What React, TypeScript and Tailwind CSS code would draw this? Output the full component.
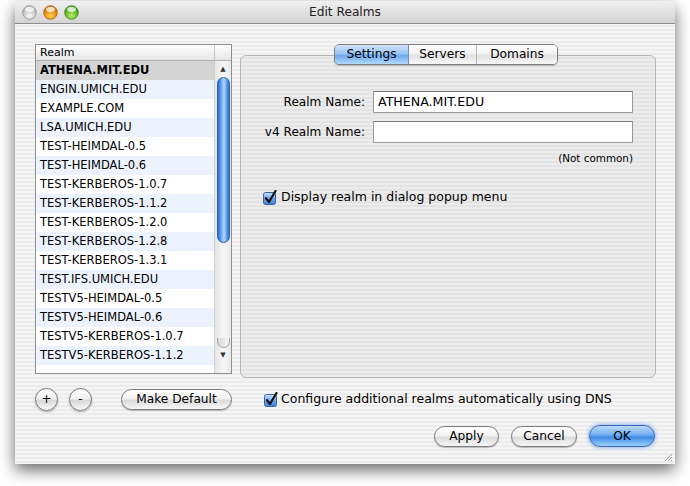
const realms = [
  "ATHENA.MIT.EDU",
  "ENGIN.UMICH.EDU",
  "EXAMPLE.COM",
  "LSA.UMICH.EDU",
  "TEST-HEIMDAL-0.5",
  "TEST-HEIMDAL-0.6",
  "TEST-KERBEROS-1.0.7",
  "TEST-KERBEROS-1.1.2",
  "TEST-KERBEROS-1.2.0",
  "TEST-KERBEROS-1.2.8",
  "TEST-KERBEROS-1.3.1",
  "TEST.IFS.UMICH.EDU",
  "TESTV5-HEIMDAL-0.5",
  "TESTV5-HEIMDAL-0.6",
  "TESTV5-KERBEROS-1.0.7",
  "TESTV5-KERBEROS-1.1.2",
];

function Light({ c1, c2, c3 }: { c1: string; c2: string; c3: string }) {
  const id = "g" + c1.replace("#", "");
  return (
    <svg width="15" height="15" viewBox="0 0 15 15">
      <defs>
        <radialGradient id={id} cx="50%" cy="75%" r="65%">
          <stop offset="0%" stopColor={c1} />
          <stop offset="100%" stopColor={c2} />
        </radialGradient>
      </defs>
      <circle cx="7.5" cy="7.5" r="6.8" fill={`url(#${id})`} stroke={c3} strokeWidth="0.8" />
      <ellipse cx="7.5" cy="4.3" rx="4.3" ry="2.6" fill="white" opacity="0.75" />
    </svg>
  );
}

function CheckBox() {
  return (
    <svg width="15" height="15" viewBox="0 0 15 15" className="shrink-0">
      <defs>
        <linearGradient id="cbg" x1="0" y1="0" x2="0" y2="1">
          <stop offset="0%" stopColor="#cfe3fb" />
          <stop offset="50%" stopColor="#6ea6ea" />
          <stop offset="100%" stopColor="#3d7fd9" />
        </linearGradient>
      </defs>
      <rect x="0.5" y="2.5" width="12" height="12" rx="2" fill="url(#cbg)" stroke="#3b63a0" />
      <path d="M3 8.2 L6 12 L12.5 1" stroke="#111" strokeWidth="2.2" fill="none" strokeLinecap="round" strokeLinejoin="round" />
    </svg>
  );
}

function Pill({ label, className }: { label: string; className?: string }) {
  return (
    <button
      className={
        "h-[21px] rounded-full border border-[#7c7c7c] bg-[linear-gradient(180deg,#ffffff_0%,#f1f1f1_45%,#dcdcdc_55%,#f6f6f6_100%)] shadow-[0_1px_1px_rgba(0,0,0,0.25)] text-[12.2px] text-black leading-none " +
        (className ?? "")
      }
    >
      {label}
    </button>
  );
}

function Round({ label }: { label: string }) {
  return (
    <button className="w-[23px] h-[23px] rounded-full border border-[#7a7a7a] bg-[linear-gradient(180deg,#ffffff_0%,#f0f0f0_45%,#d8d8d8_55%,#f8f8f8_100%)] shadow-[0_1px_2px_rgba(0,0,0,0.3)] text-[12px] leading-none text-black flex items-center justify-center">
      {label}
    </button>
  );
}

export default function App() {
  return (
    <div className="w-[690px] h-[486px] bg-white pl-[15px] pt-[1px] font-['DejaVu_Sans',sans-serif] text-black text-[12.5px]">
      <div className="relative w-[660px] h-[463px] rounded-t-[7px] shadow-[0_6px_16px_rgba(0,0,0,0.6)] bg-[repeating-linear-gradient(180deg,#ececec_0px,#ececec_2px,#f5f5f5_2px,#f5f5f5_4px)] flex flex-col">
        {/* title bar */}
        <div className="h-[23px] rounded-t-[7px] border-b border-[#8d8d8d] bg-[linear-gradient(180deg,#f0f0f0,#d4d4d4)] flex items-center relative">
          <div className="flex gap-[6px] pl-[7px] pt-[1px]">
            <Light c1="#f7f7f7" c2="#b4b4b4" c3="#909090" />
            <Light c1="#ffd24a" c2="#d86a00" c3="#a85a10" />
            <Light c1="#b6f26a" c2="#3c9a0c" c3="#3b7a1a" />
          </div>
          <div className="absolute inset-0 flex items-center justify-center text-[12.2px] text-[#222]">
            Edit Realms
          </div>
        </div>

        <div className="flex flex-col pl-[20px] pt-[20px]">
          <div className="flex items-start h-[334px]">
            {/* list */}
            <div className="w-[197px] h-[330px] border border-[#8e8e8e] bg-white flex flex-col overflow-hidden">
              <div className="h-[16px] border-b border-[#b0b0b0] bg-[linear-gradient(180deg,#ffffff,#e6e6e6)] flex text-[11px]">
                <div className="flex-1 border-r border-[#c8c8c8] pl-[4px] leading-[16px]">Realm</div>
                <div className="w-[16px]" />
              </div>
              <div className="flex flex-1 overflow-hidden">
                <div className="flex-1 flex flex-col border-r border-[#d0d0d0]">
                  {realms.map((r, i) => (
                    <div
                      key={r}
                      className={
                        "h-[19px] shrink-0 pl-[4px] leading-[19px] text-[11.5px] whitespace-nowrap " +
                        (i === 0 ? "bg-[#d4d4d4] font-bold" : i % 2 === 1 ? "bg-[#edf3fe]" : "bg-white")
                      }
                    >
                      {r}
                    </div>
                  ))}
                </div>
                {/* scrollbar */}
                <div className="w-[16px] flex flex-col items-center bg-[linear-gradient(90deg,#e4e4e4,#f7f7f7_50%,#e8e8e8)]">
                  <div className="h-[16px] w-full flex items-center justify-center text-[7px] text-[#333]">▲</div>
                  <div className="w-[13px] h-[166px] rounded-full border border-[#2f62ad] bg-[linear-gradient(90deg,#2a6ccb,#78b2f0_35%,#b4d8fa_55%,#5b9be6_80%,#2f6fc9)]" />
                  <div className="flex-1" />
                  <div className="w-[13px] h-[10px] rounded-b-full border border-t-0 border-[#a8a8a8] bg-[linear-gradient(90deg,#d8d8d8,#f4f4f4)]" />
                  <div className="h-[15px] w-full flex items-center justify-center text-[7px] text-[#333]">▼</div>
                  <div className="h-[10px]" />
                </div>
              </div>
            </div>

            {/* tab view */}
            <div className="ml-[8px] w-[416px] flex flex-col">
              <div className="relative z-10 -mb-[10px] flex justify-center pr-[4px]">
                <div className="flex h-[21px] rounded-[5px] border border-[#7f7f7f] overflow-hidden shadow-[0_1px_1px_rgba(0,0,0,0.2)] text-[12.2px]">
                  <div className="w-[74px] flex items-center justify-center border-r border-[#6f8fc0] bg-[linear-gradient(180deg,#cfe4fb_0%,#9cc6f5_45%,#6eaaf0_55%,#b3d9fb_100%)]">
                    Settings
                  </div>
                  <div className="w-[68px] flex items-center justify-center border-r border-[#b5b5b5] bg-[linear-gradient(180deg,#ffffff_0%,#f2f2f2_45%,#e2e2e2_55%,#f8f8f8_100%)]">
                    Servers
                  </div>
                  <div className="w-[80px] flex items-center justify-center bg-[linear-gradient(180deg,#ffffff_0%,#f2f2f2_45%,#e2e2e2_55%,#f8f8f8_100%)]">
                    Domains
                  </div>
                </div>
              </div>
              <div className="h-[323px] rounded-[6px] border border-[#b4b4b4] bg-[rgba(0,0,0,0.035)] flex flex-col pt-[35px]">
                <div className="flex items-center h-[22px]">
                  <div className="w-[124px] text-right text-[12.1px]">Realm Name:</div>
                  <div className="ml-[8px] w-[260px] h-[22px] bg-white border border-[#9a9a9a] border-t-[#7c7c7c] text-[12.6px] leading-[20px] pl-[4px]">
                    ATHENA.MIT.EDU
                  </div>
                </div>
                <div className="flex items-center h-[22px] mt-[8px]">
                  <div className="w-[124px] text-right text-[12.1px]">v4 Realm Name:</div>
                  <div className="ml-[8px] w-[260px] h-[22px] bg-white border border-[#9a9a9a] border-t-[#7c7c7c]" />
                </div>
                <div className="w-[392px] text-right text-[10.4px] mt-[8px] leading-[14px]">(Not common)</div>
                <div className="flex items-center gap-[3px] ml-[22px] mt-[23px]">
                  <CheckBox />
                  <span>Display realm in dialog popup menu</span>
                </div>
              </div>
            </div>
          </div>

          {/* bottom controls */}
          <div className="flex items-center h-[22px] mt-[10px]">
            <Round label="+" />
            <div className="ml-[11px]">
              <Round label="-" />
            </div>
            <Pill label="Make Default" className="ml-[29px] w-[111px]" />
            <div className="ml-[32px] flex items-center gap-[2px]">
              <CheckBox />
              <span>Configure additional realms automatically using DNS</span>
            </div>
          </div>

          <div className="flex justify-end items-center h-[22px] mt-[15px] pr-[20px] gap-[12px]">
            <Pill label="Apply" className="w-[65px]" />
            <Pill label="Cancel" className="w-[66px]" />
            <button className="w-[66px] h-[22px] rounded-full border border-[#3767b8] bg-[linear-gradient(180deg,#bcdcfc_0%,#71acef_45%,#3d8be8_55%,#9cd0fb_100%)] shadow-[0_0_4px_rgba(40,110,220,0.7)] text-[12.2px] leading-none text-black">
              OK
            </button>
          </div>
        </div>

        {/* resize grip */}
        <svg className="absolute right-[2px] bottom-[2px]" width="10" height="10" viewBox="0 0 10 10">
          <path d="M9 2 L2 9 M9 5 L5 9 M9 8 L8 9" stroke="#9a9a9a" strokeWidth="1" />
        </svg>
      </div>
    </div>
  );
}
